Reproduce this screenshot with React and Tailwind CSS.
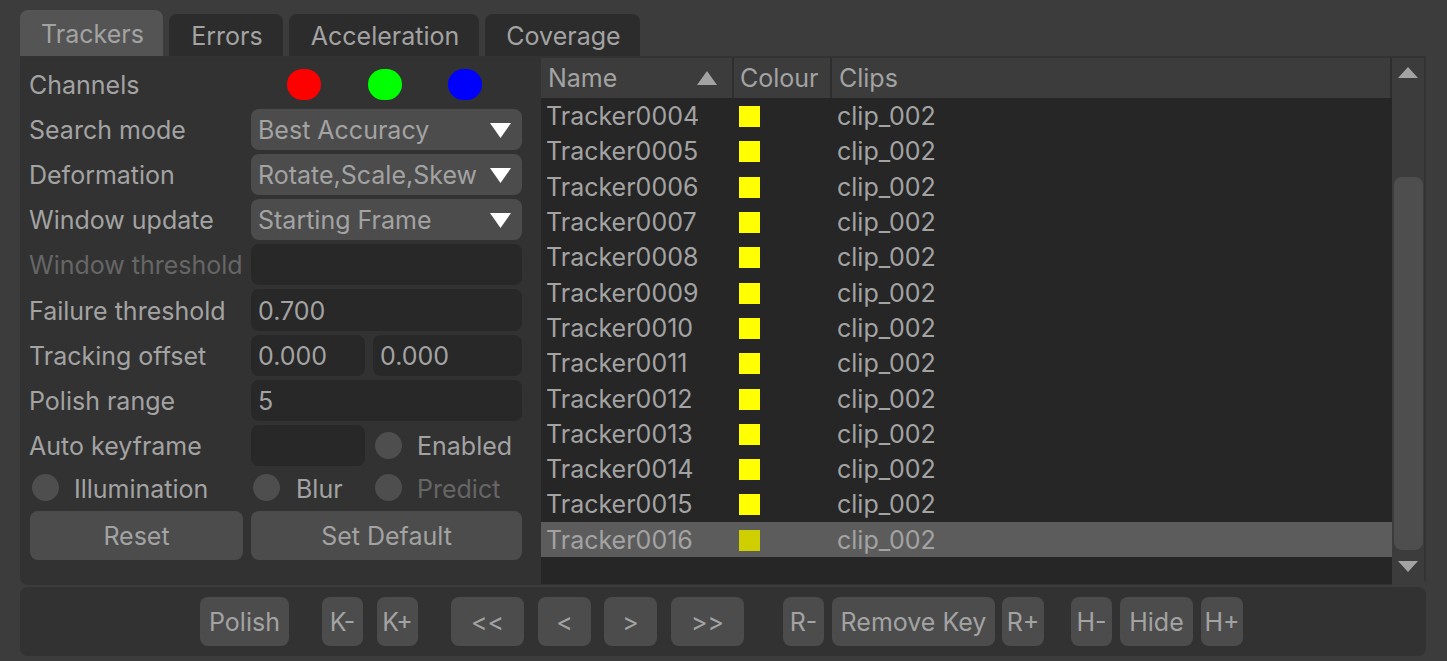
const trackers = ["0004", "0005", "0006", "0007", "0008", "0009", "0010", "0011", "0012", "0013", "0014", "0015", "0016"];

const font = "font-['Inter',sans-serif]";

function Triangle({ className, down }) {
  return (
    <svg className={className} viewBox="0 0 20 14" preserveAspectRatio="none">
      <polygon points={down ? "0,0 20,0 10,14" : "10,0 20,14 0,14"} fill="currentColor" />
    </svg>
  );
}

function Tab({ active, className, children }) {
  return (
    <div
      className={`flex items-center justify-center rounded-t-lg pl-[2px] pt-[2px] ${active ? "h-[46px] bg-[#545454]" : "h-[42px] bg-[#2c2c2c]"} ${className}`}
    >
      {children}
    </div>
  );
}

function Label({ disabled, children }) {
  return (
    <div className={`w-[221px] shrink-0 ml-[9px] mr-[1px] pt-[2px] whitespace-nowrap ${disabled ? "text-[#666666]" : ""}`}>
      {children}
    </div>
  );
}

function Row({ className = "", children }) {
  return <div className={`flex h-[41.1px] shrink-0 items-center ${className}`}>{children}</div>;
}

function Select({ children }) {
  return (
    <div className="flex h-full w-[271px] items-center justify-between rounded-lg bg-[#4c4c4c] pl-[7px] pr-[11px] pt-[2px] whitespace-nowrap">
      {children}
      <Triangle down className="h-[15px] w-[21px] shrink-0 text-white" />
    </div>
  );
}

function Field({ className = "w-[271px]", children }) {
  return (
    <div className={`flex h-full items-center rounded-lg bg-[#282828] pl-[7px] pt-[2px] ${className}`}>{children}</div>
  );
}

function Radio({ className = "" }) {
  return <div className={`h-[27px] w-[27px] shrink-0 rounded-full bg-[#4e4e4e] ${className}`} />;
}

function Btn({ className, children }) {
  return (
    <div className={`flex h-[49px] shrink-0 items-center justify-center rounded-lg bg-[#4c4c4c] pt-[2px] ${className}`}>
      {children}
    </div>
  );
}

export default function App() {
  return (
    <div className={`flex h-[661px] w-[1447px] flex-col overflow-hidden bg-[#3c3c3c] pl-[20px] pt-[10px] text-[25px] leading-none text-[#a3a3a3] ${font}`}>
      <div className="flex items-end">
        <Tab active className="w-[143px]">Trackers</Tab>
        <Tab className="ml-[6px] w-[114px]">Errors</Tab>
        <Tab className="ml-[6px] w-[190px]">Acceleration</Tab>
        <Tab className="ml-[6px] w-[155px]">Coverage</Tab>
      </div>

      <div className="flex h-[529px] w-[1406px] rounded-b-lg border-r-2 border-t-2 border-[#333333] bg-[#323232]">
        <div className="flex w-[521px] shrink-0 flex-col gap-[4px] pt-[6px]">
          <Row>
            <Label>Channels</Label>
            <div className="flex gap-[46.5px] pl-[36px]">
              <div className="h-[31px] w-[34px] rounded-full bg-[#ff0000]" />
              <div className="h-[31px] w-[34px] rounded-full bg-[#00ff00]" />
              <div className="h-[31px] w-[34px] rounded-full bg-[#0000ff]" />
            </div>
          </Row>
          <Row>
            <Label>Search mode</Label>
            <Select>Best Accuracy</Select>
          </Row>
          <Row>
            <Label>Deformation</Label>
            <Select>Rotate,Scale,Skew</Select>
          </Row>
          <Row>
            <Label>Window update</Label>
            <Select>Starting Frame</Select>
          </Row>
          <Row>
            <Label disabled>Window threshold</Label>
            <Field />
          </Row>
          <Row>
            <Label>Failure threshold</Label>
            <Field>0.700</Field>
          </Row>
          <Row>
            <Label>Tracking offset</Label>
            <Field className="w-[114px]">0.000</Field>
            <Field className="ml-[8px] w-[149px]">0.000</Field>
          </Row>
          <Row>
            <Label>Polish range</Label>
            <Field>5</Field>
          </Row>
          <Row>
            <Label>Auto keyframe</Label>
            <Field className="w-[114px]" />
            <Radio className="ml-[10px]" />
            <span className="ml-[15px] pt-[2px]">Enabled</span>
          </Row>
          <Row className="-mt-[3px]">
            <Radio className="ml-[12px]" />
            <span className="ml-[15px] w-[179px] pt-[5px]">Illumination</span>
            <Radio />
            <span className="ml-[16px] w-[79px] pt-[5px]">Blur</span>
            <Radio />
            <span className="ml-[15px] pt-[5px] text-[#666666]">Predict</span>
          </Row>
          <div className="-mt-[1px] ml-[10px] flex gap-[8px]">
            <Btn className="w-[213px]">Reset</Btn>
            <Btn className="w-[271px]">Set Default</Btn>
          </div>
        </div>

        <div className="flex min-w-0 flex-1 flex-col pb-[1px]">
          <div className="flex h-[40px] shrink-0 bg-[#3c3c3c]">
            <div className="flex w-[193px] items-center justify-between border-r-2 border-[#2e2e2e] pl-[7px] pr-[15px]">
              Name
              <Triangle className="h-[14px] w-[20px] text-[#a3a3a3]" />
            </div>
            <div className="flex w-[98px] items-center border-r-2 border-[#2e2e2e] pl-[6px]">Colour</div>
            <div className="flex w-[560px] items-center border-r-2 border-[#2e2e2e] pl-[7px]">Clips</div>
          </div>
          <div className="flex-1 bg-[#262626]">
            {trackers.map((t) => (
              <div
                key={t}
                className={`flex h-[35.3px] items-center pl-[5px] pt-[2px] ${t === "0016" ? "bg-[#5c5c5c]" : ""}`}
              >
                <div className="w-[193px]">Tracker{t}</div>
                <div className="w-[99px]">
                  <div className={`h-[21px] w-[21px] ${t === "0016" ? "bg-[#cfcf00]" : "bg-[#ffff00]"}`} />
                </div>
                <div className="-ml-[1px]">clip_002</div>
              </div>
            ))}
          </div>
        </div>

        <div className="flex w-[32px] shrink-0 flex-col items-center bg-[#3c3c3c] pb-[10px] pt-[9px]">
          <Triangle className="h-[11px] w-[20px] shrink-0 text-[#a3a3a3]" />
          <div className="mt-[99px] h-[373px] w-[29px] rounded-lg bg-[#4e4e4e]" />
          <Triangle down className="mt-[11px] h-[11px] w-[20px] shrink-0 text-[#a3a3a3]" />
        </div>
      </div>

      <div className="mt-[2px] flex h-[69px] w-[1406px] items-center rounded-lg bg-[#323232] pl-[180px]">
        <Btn className="w-[89px]">Polish</Btn>
        <Btn className="ml-[33px] w-[41px]">K-</Btn>
        <Btn className="ml-[14px] w-[41px]">K+</Btn>
        <Btn className="ml-[33px] w-[73px]">&lt;&lt;</Btn>
        <Btn className="ml-[14px] w-[53px]">&lt;</Btn>
        <Btn className="ml-[13px] w-[53px]">&gt;</Btn>
        <Btn className="ml-[14px] w-[73px]">&gt;&gt;</Btn>
        <Btn className="ml-[39px] w-[41px]">R-</Btn>
        <Btn className="ml-[8px] w-[163px]">Remove Key</Btn>
        <Btn className="ml-[7px] w-[42px]">R+</Btn>
        <Btn className="ml-[27px] w-[41px]">H-</Btn>
        <Btn className="ml-[8px] w-[73px]">Hide</Btn>
        <Btn className="ml-[8px] w-[42px]">H+</Btn>
      </div>
    </div>
  );
}
